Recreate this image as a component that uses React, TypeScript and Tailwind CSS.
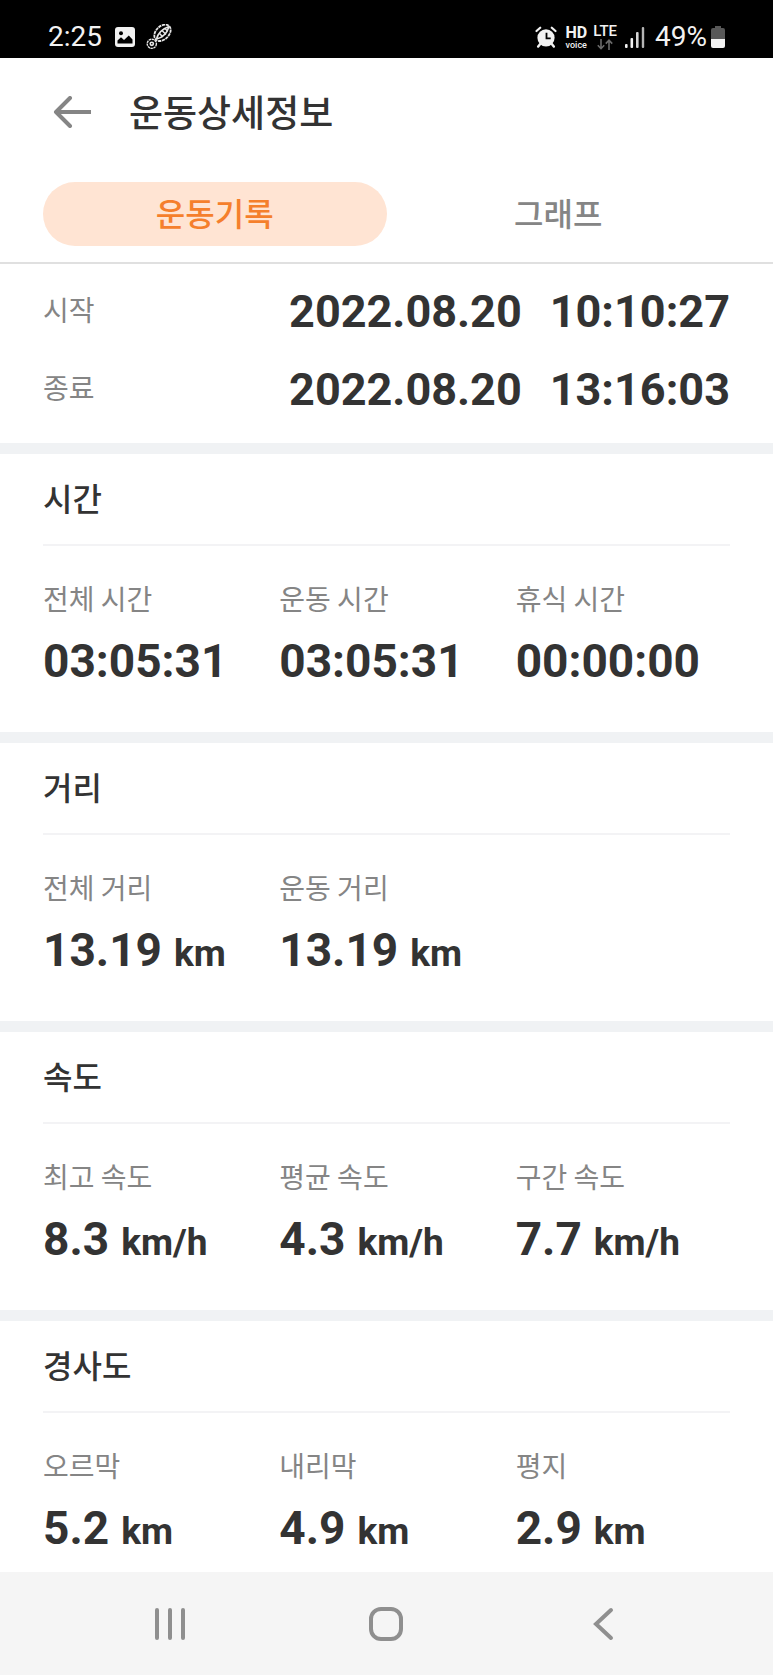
import clsx from "clsx";
import { useState } from "react";
import type { ReactNode } from "react";

type Metric = {
  label: string;
  value: string;
  unit?: string;
};

const tabs = [
  { id: "record", label: "운동기록" },
  { id: "graph", label: "그래프" }
];

const period = [
  { label: "시작", date: "2022.08.20", time: "10:10:27" },
  { label: "종료", date: "2022.08.20", time: "13:16:03" }
];

const sections: { title: string; metrics: Metric[] }[] = [
  {
    title: "시간",
    metrics: [
      { label: "전체 시간", value: "03:05:31" },
      { label: "운동 시간", value: "03:05:31" },
      { label: "휴식 시간", value: "00:00:00" }
    ]
  },
  {
    title: "거리",
    metrics: [
      { label: "전체 거리", value: "13.19", unit: "km" },
      { label: "운동 거리", value: "13.19", unit: "km" }
    ]
  },
  {
    title: "속도",
    metrics: [
      { label: "최고 속도", value: "8.3", unit: "km/h" },
      { label: "평균 속도", value: "4.3", unit: "km/h" },
      { label: "구간 속도", value: "7.7", unit: "km/h" }
    ]
  },
  {
    title: "경사도",
    metrics: [
      { label: "오르막", value: "5.2", unit: "km" },
      { label: "내리막", value: "4.9", unit: "km" },
      { label: "평지", value: "2.9", unit: "km" }
    ]
  }
];

function PictureIcon() {
  return (
    <svg aria-hidden width="20" height="20" viewBox="0 0 20 20">
      <rect width="20" height="20" rx="3" fill="#f2f2f2" />
      <circle cx="6" cy="6.2" r="2" fill="#000" />
      <path d="M2.5 16.5v-3L6 10.3l3 2.8 4.8-4.6 3.7 4v4z" fill="#000" />
    </svg>
  );
}

function ShoeIcon() {
  return (
    <svg aria-hidden width="26" height="26" viewBox="0 0 26 26" fill="none" stroke="#e6e6e6">
      <ellipse cx="16.5" cy="8.8" rx="9.5" ry="6.6" transform="rotate(-45 16.5 8.8)" strokeWidth="1.8" strokeDasharray="3.2 0.7" />
      <path d="M10.5 15 C12 9 16 5 23 2.500M10.500 15C17 13.500 21 9.500 23 2.500" strokeWidth="1.600" />
      <path d="M13.5 9.5l3.500 3.500M16 6.500l4 4M19 4.500l2.500 2.500" strokeWidth="1.500" />
      <circle cx="5.800" cy="19.800" r="4.600" strokeWidth="1.400" strokeDasharray="2.400 0.600" />
      <circle cx="5.800" cy="19.800" r="1.600" strokeWidth="1.600" />
    </svg>
  );
}

function AlarmIcon() {
  return (
    <svg aria-hidden width="22" height="22" viewBox="0 0 22 22">
      <circle cx="11" cy="11.8" r="8.6" fill="#f2f2f2" />
      <path d="M1.5 5 5.2 1.7M20.5 5l-3.7-3.3" stroke="#f2f2f2" strokeWidth="2.2" strokeLinecap="round" />
      <path d="m5.2 18-2 2.6M16.8 18l2 2.6" stroke="#f2f2f2" strokeWidth="2.4" strokeLinecap="round" />
      <path d="M11.5 6.8v5.6h4.2" fill="none" stroke="#000" strokeWidth="1.8" />
    </svg>
  );
}

function DataArrows() {
  return (
    <svg aria-hidden width="16" height="11" viewBox="0 0 16 11" fill="none" stroke="#6b6b6b" strokeWidth="1.6">
      <path d="M4 0v9.5M.8 6.3 4 9.7l3.2-3.4" />
      <path d="M12 11V1.2M8.8 4.6 12 1.2l3.2 3.4" />
    </svg>
  );
}

function SignalIcon() {
  return (
    <svg aria-hidden width="20" height="21" viewBox="0 0 20 21" fill="#f2f2f2">
      <rect y="17" width="2.6" height="4" rx="1" />
      <rect x="5.5" y="11" width="2.6" height="10" rx="1" />
      <rect x="11" y="5" width="2.6" height="16" rx="1" fill="#d5d5d5" />
      <rect x="16.8" width="2.4" height="21" rx="1" fill="#b5b5b5" />
    </svg>
  );
}

function BatteryIcon() {
  return (
    <svg aria-hidden width="14" height="22" viewBox="0 0 14 22">
      <path d="M4 0h6v2h2a2 2 0 0 1 2 2v9H0V4a2 2 0 0 1 2-2h2z" fill="#585858" />
      <path d="M0 13h14v7a2 2 0 0 1-2 2H2a2 2 0 0 1-2-2z" fill="#f2f2f2" />
    </svg>
  );
}

function StatusBar() {
  return (
    <div className="flex h-[58px] shrink-0 items-start justify-between bg-black px-12 pt-[23px] font-[Roboto,sans-serif] text-[#f2f2f2]">
      <div className="flex h-7 items-center">
        <span className="text-[28px] leading-7">2:25</span>
        <span className="ml-[13px]">
          <PictureIcon />
        </span>
        <span className="ml-[11px]">
          <ShoeIcon />
        </span>
      </div>

      <div className="flex h-7 items-center">
        <AlarmIcon />
        <span className="ml-2 flex flex-col items-center">
          <span className="text-base leading-4 font-bold">HD</span>
          <span className="text-[9px] leading-[9px] font-medium">voice</span>
        </span>
        <span className="ml-[6px] flex flex-col items-center">
          <span className="text-[15px] leading-[15px] font-medium">LTE</span>
          <DataArrows />
        </span>
        <span className="ml-2">
          <SignalIcon />
        </span>
        <span className="ml-[10px] text-[28px] leading-7">49%</span>
        <span className="ml-1">
          <BatteryIcon />
        </span>
      </div>
    </div>
  );
}

function Header() {
  return (
    <header className="flex h-[108px] shrink-0 items-center pl-[53px]">
      <button type="button" aria-label="뒤로" className="text-[#858585]">
        <svg aria-hidden width="38" height="32" viewBox="0 0 38 32" fill="none" stroke="currentColor" strokeWidth="4">
          <path d="M38 16H3" />
          <path d="M17 2 3 16l14 14" strokeLinejoin="round" strokeLinecap="round" />
        </svg>
      </button>
      <h1 className="ml-[38px] pb-[2px] text-[37px] leading-[54px] font-medium text-[#333333]">운동상세정보</h1>
    </header>
  );
}

function MetricItem({ label, value, unit }: Metric) {
  return (
    <div>
      <dt className="text-[28px] leading-10 text-[#858585]">{label}</dt>
      <dd className="mt-[18px] flex h-[50px] items-baseline gap-3 font-[Roboto,sans-serif] text-[46px] leading-[50px] font-bold">
        <span>{value}</span>
        {unit ? <span className="text-[37px] leading-10">{unit}</span> : null}
      </dd>
    </div>
  );
}

function Section({ title, children }: { title: string; children: ReactNode }) {
  return (
    <section className="border-t-[11px] border-[#f0f2f4] px-[43px] pb-[46px]">
      <h2 className="border-b-2 border-[#f3f3f5] pt-5 pb-6 text-[32px] leading-[46px] font-medium">{title}</h2>
      <dl className="mt-8 grid grid-cols-3 gap-x-[22px]">{children}</dl>
    </section>
  );
}

function NavigationBar() {
  return (
    <nav className="grid h-[103px] shrink-0 grid-cols-3 place-items-center bg-[#f5f5f5] px-[62px] text-[#8f8f8f]">
      <button type="button" aria-label="최근 앱">
        <svg aria-hidden width="32" height="34" viewBox="0 0 32 34" stroke="currentColor" strokeWidth="4" strokeLinecap="round">
          <path d="M3 3v28M16 3v28M29 3v28" />
        </svg>
      </button>
      <button type="button" aria-label="홈">
        <svg aria-hidden width="36" height="36" viewBox="0 0 36 36" fill="none" stroke="currentColor" strokeWidth="4">
          <rect x="3" y="3" width="30" height="30" rx="10" />
        </svg>
      </button>
      <button type="button" aria-label="이전">
        <svg
          aria-hidden
          width="22"
          height="34"
          viewBox="0 0 22 34"
          fill="none"
          stroke="currentColor"
          strokeWidth="4"
          strokeLinecap="round"
        >
          <path d="M19 3 4 17l15 14" />
        </svg>
      </button>
    </nav>
  );
}

export default function App() {
  const [activeTab, setActiveTab] = useState("record");

  return (
    <div className="flex h-screen flex-col bg-white font-['Noto_Sans_CJK_KR',sans-serif] text-[#333333]">
      <StatusBar />
      <Header />

      <div role="tablist" className="grid shrink-0 grid-cols-2 border-b-2 border-[#e0e0e0] px-[43px] py-4">
        {tabs.map((tab) => {
          const isActive = tab.id === activeTab;

          return (
            <button
              key={tab.id}
              type="button"
              role="tab"
              aria-selected={isActive}
              onClick={() => setActiveTab(tab.id)}
              className={clsx(
                "h-16 rounded-full pb-1 text-[32px] leading-[46px] font-medium",
                isActive ? "bg-[#ffe4d3] text-[#f57f2c]" : "text-[#858585]"
              )}
            >
              {tab.label}
            </button>
          );
        })}
      </div>

      <main className="min-h-0 flex-1 overflow-y-auto [scrollbar-width:none]">
        <dl className="px-[43px] pt-2 pb-[15px]">
          {period.map((row) => (
            <div key={row.label} className="flex h-[78px] items-center justify-between">
              <dt className="pb-1 text-[28px] leading-10 text-[#858585]">{row.label}</dt>
              <dd className="flex gap-7 pt-[2px] font-[Roboto,sans-serif] text-[45px] leading-[50px] font-bold">
                <span>{row.date}</span>
                <span>{row.time}</span>
              </dd>
            </div>
          ))}
        </dl>

        {sections.map((section) => (
          <Section key={section.title} title={section.title}>
            {section.metrics.map((metric) => (
              <MetricItem key={metric.label} {...metric} />
            ))}
          </Section>
        ))}
      </main>

      <NavigationBar />
    </div>
  );
}
